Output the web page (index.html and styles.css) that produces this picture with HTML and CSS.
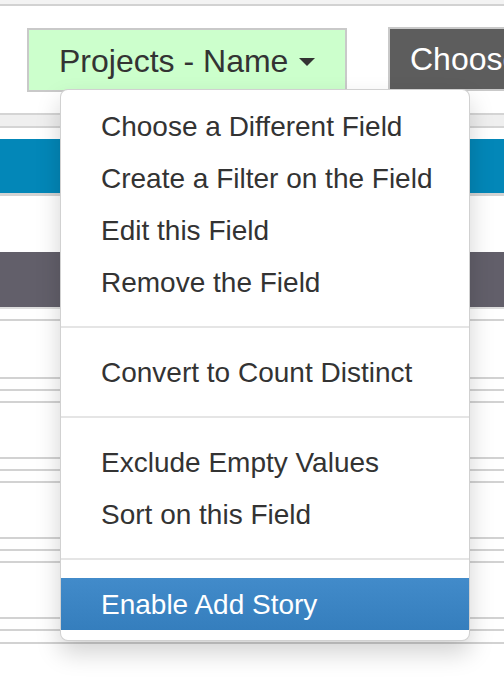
FILE: index.html
```html
<!DOCTYPE html>
<html>
<head>
<meta charset="utf-8">
<link rel="stylesheet" href="styles.css">
</head>
<body>
<div class="page">
  <div class="topbar"></div>
  <div class="toolbar">
    <div class="field-wrap">
      <button class="btn btn-field">Projects - Name <span class="caret"></span></button>
      <ul class="menu">
        <li><a>Choose a Different Field</a></li>
        <li><a>Create a Filter on the Field</a></li>
        <li><a>Edit this Field</a></li>
        <li><a>Remove the Field</a></li>
        <li class="divider"></li>
        <li><a>Convert to Count Distinct</a></li>
        <li class="divider"></li>
        <li><a>Exclude Empty Values</a></li>
        <li><a>Sort on this Field</a></li>
        <li class="divider"></li>
        <li class="active"><a>Enable Add Story</a></li>
      </ul>
    </div>
    <button class="btn btn-dark">Choose a Field</button>
  </div>
  <div class="grid">
    <div class="row-a"></div>
    <div class="row-b"></div>
    <div class="row-c"></div>
    <div class="band-blue"></div>
    <div class="gap-56"></div>
    <div class="band-dark"></div>
    <div class="gap-10"></div>
    <div class="rule"></div>
    <div class="gap-2"></div>
    <div class="group">
      <div class="rule"></div><div class="rule mid"></div><div class="rule mid"></div>
    </div>
    <div class="group">
      <div class="rule"></div><div class="rule mid"></div><div class="rule mid"></div>
    </div>
    <div class="group">
      <div class="rule"></div><div class="rule mid"></div><div class="rule mid"></div>
    </div>
    <div class="group">
      <div class="rule"></div><div class="rule mid"></div><div class="rule mid wide"></div>
    </div>
  </div>
</div>
</body>
</html>
```
FILE: styles.css
```css
html, body {
  margin: 0;
  padding: 0;
  background: #ffffff;
}
.page {
  width: 504px;
  height: 678px;
  overflow: hidden;
  font-family: "Liberation Sans", Arial, sans-serif;
  color: #333333;
}
.topbar {
  height: 4px;
  background: #f3f3f3;
  border-bottom: 2px solid #d2d2d2;
}
.toolbar {
  display: flex;
  align-items: flex-start;
  gap: 41px;
  padding: 22px 0 0 27px;
  white-space: nowrap;
}
.field-wrap {
  position: relative;
}
.btn {
  box-sizing: border-box;
  height: 64px;
  border: 2px solid #c9c9c9;
  font-family: "Liberation Sans", Arial, sans-serif;
  font-size: 32px;
  line-height: 36px;
  margin: 0;
  cursor: pointer;
}
.btn-field {
  width: 320px;
  background: #ccffcc;
  color: #333333;
  padding: 2px 0 0 30px;
  text-align: left;
}
.caret {
  display: inline-block;
  width: 0;
  height: 0;
  margin-left: 2px;
  vertical-align: middle;
  border-top: 8px solid #333333;
  border-left: 8px solid transparent;
  border-right: 8px solid transparent;
  position: relative;
  top: -2px;
}
.btn-dark {
  flex: none;
  width: 300px;
  margin-top: -1px;
  background: #5d5d5d;
  color: #ffffff;
  padding: 0 0 0 20px;
  text-align: left;
}
.menu {
  position: absolute;
  left: 33px;
  top: 61px;
  z-index: 10;
  box-sizing: border-box;
  width: 410px;
  margin: 0;
  padding: 10px 0;
  list-style: none;
  background: #ffffff;
  border: 1px solid rgba(0, 0, 0, 0.18);
  border-radius: 8px;
  box-shadow: 0 12px 24px rgba(0, 0, 0, 0.175);
  font-size: 28px;
  line-height: 40px;
}
.menu li a {
  display: block;
  padding: 7px 40px 5px;
  color: #333333;
  white-space: nowrap;
}
.menu .divider {
  height: 2px;
  margin: 18px 0;
  background: #e5e5e5;
}
.menu .active a {
  color: #ffffff;
  background: linear-gradient(to bottom, #428bca 0%, #357ebd 100%);
}
.row-a {
  height: 21px;
  border-bottom: 2px solid #d4d4d4;
}
.row-b {
  height: 11px;
  background: #efefef;
  border-bottom: 2px solid #d4d4d4;
}
.row-c {
  height: 11px;
}
.band-blue {
  height: 54px;
  background: #0387b8;
  border-bottom: 3px solid #d3d3d3;
}
.gap-56 {
  height: 56px;
}
.band-dark {
  height: 55px;
  background: #625f6a;
  border-bottom: 2px solid #dedede;
}
.gap-10 {
  height: 10px;
}
.gap-2 {
  height: 2px;
}
.rule {
  height: 2px;
  background: #d2d2d2;
}
.group {
  padding-top: 54px;
}
.rule.mid {
  margin-top: 10px;
}
.rule.wide {
  margin-top: 11px;
}
```
